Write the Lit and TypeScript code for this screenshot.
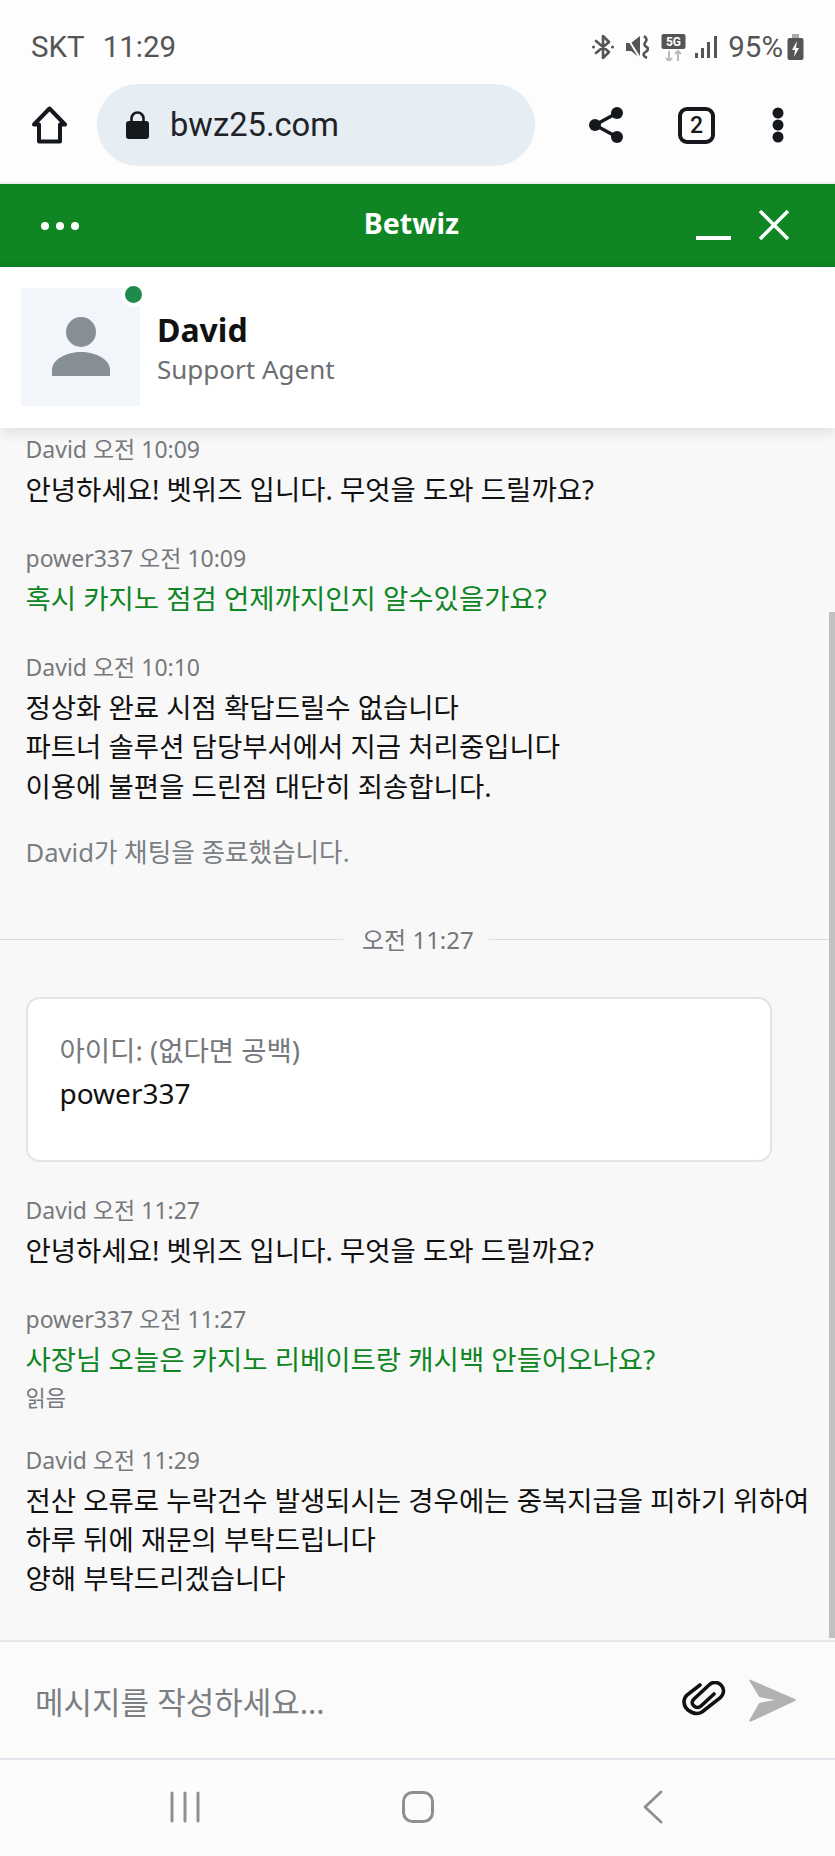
import { LitElement, html, css } from "lit";
import { customElement } from "lit/decorators.js";

const msg = (who: string, lines: string[], cls = "") => html`
  <div class="msg">
    <div class="meta">${who}</div>
    <div class="text ${cls}">${lines.map((l) => html`<div>${l}</div>`)}</div>
  </div>`;

@customElement("app-root")
export class AppRoot extends LitElement {
  static styles = css`
    :host { display: block; width: 835px; height: 1856px; overflow: hidden; background: #fbfcfe;
      font-family: "Noto Sans", "Noto Sans CJK KR", sans-serif; }
    svg { display: block; flex: none; }
    .page { display: flex; flex-direction: column; height: 1856px; }
    .status { height: 84px; flex: none; display: flex; align-items: center; padding: 10px 31px 0 31px; box-sizing: border-box;
      font-family: Roboto, sans-serif; font-size: 29.5px; color: #555; background: #fdfdfe; }
    .status .carrier { margin-right: 18px; }
    .status .right { margin-left: auto; display: flex; align-items: center; }
    .toolbar { height: 100px; flex: none; display: flex; align-items: center; box-sizing: border-box; padding: 0 0 16px 31px;
      background: #fdfdfe; border-bottom: 2px solid #eceef0; position: relative; }
    .pill { width: 438px; height: 82px; margin-left: 29px; border-radius: 41px; background: #e6edf3; display: flex; align-items: center;
      padding-left: 29px; box-sizing: border-box; font-family: Roboto, sans-serif; font-size: 32.7px; color: #1f2328; gap: 21px; }
    .tools { display: flex; align-items: center; margin-left: 54px; }
    .tab { width: 37px; height: 37px; border: 4px solid #15181c; border-radius: 9px; box-sizing: border-box; display: flex; align-items: center; justify-content: center;
      font: 500 23px Roboto, sans-serif; color: #15181c; margin: 0 56px 0 55px; }
    .appbar { height: 83px; flex: none; background: #0f8523; display: flex; align-items: center; position: relative; color: #fff; padding: 0 45px 0 41px; box-sizing: border-box; }
    .appbar .title { flex: 1; text-align: center; font-weight: 700; font-size: 28.5px; padding: 0 0 6px 48px; }
    .dots { display: flex; gap: 7px; }
    .dots i { width: 8px; height: 8px; border-radius: 50%; background: #fff; display: block; }
    .close { margin: 0 0 2px 27px; }
    .agent { height: 161px; flex: none; background: #fff; display: flex; align-items: center; padding: 0 0 2px 21px; box-sizing: border-box; gap: 17px;
      box-shadow: 0 3px 14px rgba(0, 0, 0, 0.12); position: relative; z-index: 2; }
    .avatar { width: 119px; height: 118px; background: #f2f6fa; position: relative; display: flex; align-items: center; justify-content: center; }
    .dot { position: absolute; right: -5.5px; top: -5.5px; width: 17px; height: 17px; border-radius: 50%; background: #1e8a4c; border: 4px solid #fff; }
    .who { padding-top: 2px; }
    .name { font-weight: 700; font-size: 32px; line-height: 42px; color: #111; }
    .role { font-size: 26px; line-height: 36px; color: #6b6f73; }
    .chat { flex: 1; min-height: 0; background: #f8f8f8; position: relative; overflow: hidden; padding: 1.5px 0 0 25.5px; }
    .bar { position: absolute; right: 0; top: 184px; bottom: 2px; width: 6px; background: #c1c1c1; }
    .msg { margin-bottom: 29.5px; }
    .meta { font-size: 23px; line-height: 38px; color: #75797d; }
    .text { font-size: 27.5px; line-height: 39.5px; color: #111; margin-top: 2px; }
    .text.me { color: #0f8523; }
    .read { font-size: 22px; line-height: 30px; color: #75797d; margin-top: 3px; margin-bottom: -1px; }
    .last .text { line-height: 39px; }
    .ended { font-size: 25.6px; line-height: 38px; color: #7b7f83; margin-top: -2px; }
    .divider { display: flex; align-items: center; gap: 15px; margin: 49px 0 0 -25.5px; font-size: 24px; line-height: 38px; color: #75797d; }
    .divider::before, .divider::after { content: ""; flex: 1; height: 1px; background: #dcdcdc; }
    .divider::before { flex: none; width: 343px; }
    .divider span { margin-left: 4px; }
    .card { width: 746px; height: 165px; box-sizing: border-box; margin: 38px 0 29px; border: 2px solid #e4e4e4; border-radius: 14px; background: #fff; padding: 32px 32px; }
    .card .label { font-size: 27.5px; line-height: 40px; color: #75797d; }
    .card .value { font-size: 28px; line-height: 42px; color: #111; margin-top: 1px; }
    .composer { height: 120px; flex: none; background: #fbfbfb; border-top: 2px solid #e6e6e6; border-bottom: 2px solid #e2e6ec; box-sizing: border-box; display: flex; align-items: center; padding: 0 39px 0 35px;
      font-size: 31px; color: #7b7f83; }
    .composer .ph { flex: 1; }
    .nav { height: 96px; flex: none; background: #fcfcff; display: flex; align-items: center; padding: 0 0 2px 170px; box-sizing: border-box; }
  `;

  render() {
    return html`<div class="page">
      <div class="status">
        <span class="carrier">SKT</span><span>11:29</span>
        <div class="right">
          <svg width="22" height="24" viewBox="0 0 22 24" fill="none" stroke="#555" stroke-width="2.6" stroke-linecap="round">
            <path d="M11 1v22M4 6l13 11M4 18L17 7M11 1l6 6M11 23l6-6"/>
            <circle cx="1.500" cy="12" r="1.500" fill="#555" stroke="none"/><circle cx="20.500" cy="12" r="1.500" fill="#555" stroke="none"/>
          </svg>
          <svg style="margin-left:12px" width="23" height="24" viewBox="0 0 23 24" fill="none">
            <path d="M0 8h5l9-7v22l-9-7H0z" fill="#555"/>
            <path d="M0 1l14 22" stroke="#fdfdfe" stroke-width="2"/>
            <path d="M18 1q4 3 1.500 6t1 5-1 5 1.500 6" stroke="#555" stroke-width="2.600"/>
          </svg>
          <svg style="margin-left:12px" width="25" height="27" viewBox="0 0 25 27">
            <rect x="0.500" y="0" width="24" height="15" rx="2" fill="#555"/>
            <path d="M8 17v10M5 24l3 3 3-3M17 27V17M14 20l3-3 3 3" stroke="#bbb" stroke-width="2" fill="none"/>
            <text x="12.500" y="12" text-anchor="middle" font-family="Roboto, sans-serif" font-size="12" font-weight="700" fill="#fff">5G</text>
          </svg>
          <svg style="margin-left:9px" width="22" height="24" viewBox="0 0 22 24" fill="#555">
            <rect x="0" y="18" width="3" height="5"/><rect x="6" y="13" width="3" height="10"/><rect x="12" y="7" width="3" height="16"/><rect x="19" y="1" width="3" height="22"/>
          </svg>
          <span style="margin-left:11px">95%</span>
          <svg style="margin-left:4px" width="17" height="26" viewBox="0 0 17 26">
            <rect x="5" y="0" width="7" height="4" fill="#aaa"/>
            <rect x="0.500" y="4" width="16" height="22" rx="2" fill="#555"/>
            <path d="M10 7l-5 9h3l-1 7 5-9H9z" fill="#fff"/>
          </svg>
        </div>
      </div>
      <div class="toolbar">
        <svg width="37" height="38" viewBox="0 0 37 38" fill="none" stroke="#15181c" stroke-width="4" stroke-linejoin="round">
          <path d="M18.500 2.500L34 18.500h-5V35.500H8V18.500H3z"/>
        </svg>
        <div class="pill">
          <svg width="23" height="28" viewBox="0 0 23 28" fill="#15181c">
            <path d="M5.500 11V7.500a6 6 0 0 1 12 0V11" fill="none" stroke="#15181c" stroke-width="2.600"/>
            <rect x="0" y="10" width="23" height="18" rx="3"/>
          </svg>
          <span>bwz25.com</span>
        </div>
        <div class="tools">
          <svg width="34" height="36" viewBox="0 0 34 36" fill="#15181c">
            <circle cx="6" cy="18" r="6"/><circle cx="28" cy="6" r="6"/><circle cx="28" cy="30" r="6"/>
            <path d="M6 18L28 6M6 18l22 12" stroke="#15181c" stroke-width="3.500"/>
          </svg>
          <div class="tab">2</div>
          <svg width="14" height="36" viewBox="0 0 14 36" fill="#15181c">
            <circle cx="7" cy="6" r="5.500"/><circle cx="7" cy="18" r="5.500"/><circle cx="7" cy="30" r="5.500"/>
          </svg>
        </div>
      </div>
      <div class="appbar">
        <div class="dots"><i></i><i></i><i></i></div>
        <div class="title">Betwiz</div>
        <svg width="35" height="30" viewBox="0 0 35 30" stroke="#fff" stroke-width="4"><path d="M0 27h35"/></svg>
        <svg class="close" width="32" height="30" viewBox="0 0 32 30" stroke="#fff" stroke-width="3.500" fill="none"><path d="M2 1l28 28M30 1L2 29"/></svg>
      </div>
      <div class="agent">
        <div class="avatar">
          <svg width="60" height="60" viewBox="0 0 60 60" fill="#868e96">
            <circle cx="30" cy="15" r="15"/>
            <path d="M1 59v-6C1 42 16 35 30 35s29 7 29 18v6z"/>
          </svg>
          <div class="dot"></div>
        </div>
        <div class="who">
          <div class="name">David</div>
          <div class="role">Support Agent</div>
        </div>
      </div>
      <div class="chat">
        ${msg("David 오전 10:09", ["안녕하세요! 벳위즈 입니다. 무엇을 도와 드릴까요?"])}
        ${msg("power337 오전 10:09", ["혹시 카지노 점검 언제까지인지 알수있을가요?"], "me")}
        ${msg("David 오전 10:10", ["정상화 완료 시점 확답드릴수 없습니다", "파트너 솔루션 담당부서에서 지금 처리중입니다", "이용에 불편을 드린점 대단히 죄송합니다."])}
        <div class="ended">David가 채팅을 종료했습니다.</div>
        <div class="divider"><span>오전 11:27</span></div>
        <div class="card">
          <div class="label">아이디: (없다면 공백)</div>
          <div class="value">power337</div>
        </div>
        ${msg("David 오전 11:27", ["안녕하세요! 벳위즈 입니다. 무엇을 도와 드릴까요?"])}
        <div class="msg">
          <div class="meta">power337 오전 11:27</div>
          <div class="text me"><div>사장님 오늘은 카지노 리베이트랑 캐시백 안들어오나요?</div></div>
          <div class="read">읽음</div>
        </div>
        <div class="last">${msg("David 오전 11:29", ["전산 오류로 누락건수 발생되시는 경우에는 중복지급을 피하기 위하여", "하루 뒤에 재문의 부탁드립니다", "양해 부탁드리겠습니다"])}</div>
        <div class="bar"></div>
      </div>
      <div class="composer">
        <div class="ph">메시지를 작성하세요...</div>
        <svg width="44" height="38" viewBox="0 0 44 38" fill="none" stroke="#111" stroke-width="3.600" stroke-linecap="round">
          <path d="M18 4L5 14c-5 5-3 12 1 15s9 5 14 2L38 17c5-5 4-10 1-13s-8-4-12 0L12 18c-3 3-2 5 0 7s5 2 7 0l13-12"/>
        </svg>
        <svg style="margin-left:23px" width="47" height="43" viewBox="0 0 47 43" fill="#b2b2b2">
          <path d="M2 1c-1-1-2 0-1.500 1L9 16c.5 1 1 2 3 2.500l14 2.500-14 2.500c-2 .5-2.500 1.500-3 2.500L.5 41c-.5 1 .5 2 1.500 1.500L46 22c1-.5 1-1.500 0-2z"/>
        </svg>
      </div>
      <div class="nav">
        <svg width="30" height="32" viewBox="0 0 30 32" stroke="#8f8f8f" stroke-width="3" stroke-linecap="round"><path d="M2 2v28M15 2v28M28 2v28"/></svg>
        <svg style="margin-left:202px" width="32" height="32" viewBox="0 0 32 32" fill="none" stroke="#8f8f8f" stroke-width="3"><rect x="1.500" y="1.500" width="29" height="29" rx="9"/></svg>
        <svg style="margin-left:209px" width="20" height="34" viewBox="0 0 20 34" fill="none" stroke="#8f8f8f" stroke-width="2.800" stroke-linecap="round" stroke-linejoin="round"><path d="M18 2L2 17l16 15"/></svg>
      </div>
    </div>`;
  }
}
